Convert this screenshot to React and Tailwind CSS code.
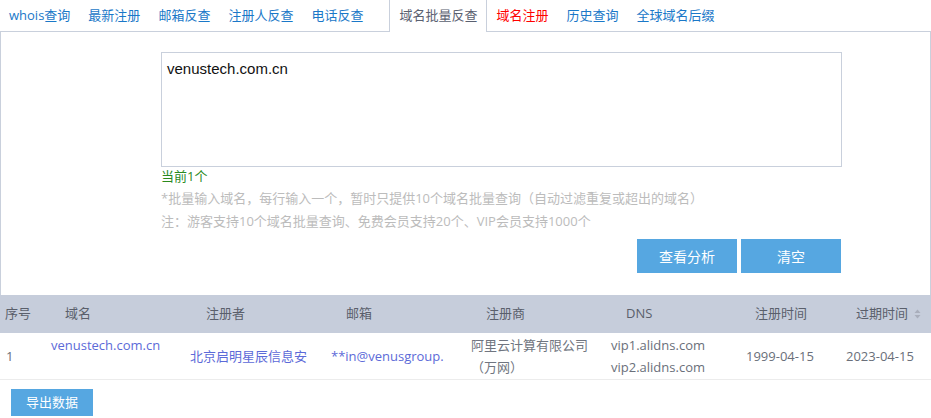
// 域名批量反查 页面
const tabs = [
  { name: 'whois查询' },
  { name: '最新注册' },
  { name: '邮箱反查' },
  { name: '注册人反查' },
  { name: '电话反查' },
  { name: '域名批量反查', active: true },
  { name: '域名注册', red: true },
  { name: '历史查询' },
  { name: '全球域名后缀' },
];

const font = { fontFamily: '"Open Sans", "Noto Sans CJK SC", sans-serif' };

function SortIcon() {
  return (
    <svg width="7" height="10" viewBox="0 0 7 10" className="ml-[6px]">
      <path d="M3.5 0.5 L6.5 4 L0.5 4 Z" fill="#a9aebb" />
      <path d="M3.5 9.5 L6.5 6 L0.5 6 Z" fill="#a9aebb" />
    </svg>
  );
}

export default function App() {
  return (
    <div className="w-[931px] h-[418px] bg-white overflow-hidden text-[13px]" style={font}>
      {/* 顶部标签 */}
      <div className="flex h-[32px] border-b border-[#c9d0dc]">
        {tabs.map((t, i) => (
          <div
            key={i}
            className={
              t.active
                ? 'ml-[17px] px-[9px] h-[32px] leading-[31px] border-x border-[#c9d0dc] bg-white text-[#5a6070]'
                : t.red
                ? 'px-[9px] leading-[31px] text-[#ff0000]'
                : 'px-[9px] leading-[31px] text-[#1a78c8]'
            }
          >
            {t.name}
          </div>
        ))}
      </div>

      {/* 输入区域 */}
      <div className="border-x border-[#c9d0dc] h-[263px] pt-[20px]">
        <div className="ml-[160px] w-[681px]">
          <div className="h-[115px] border border-[#c9d0dc] px-[5px] pt-[5px]">
            <span className="text-[15px] text-[#111]" style={{ fontFamily: '"Liberation Sans", sans-serif' }}>
              venustech.com.cn
            </span>
          </div>
          <div className="leading-[19px] text-[#2a8a1e]">当前1个</div>
          <div className="mt-[3px] leading-[19px] text-[#bcbcbc]">
            *批量输入域名，每行输入一个，暂时只提供10个域名批量查询（自动过滤重复或超出的域名）
          </div>
          <div className="mt-[4px] leading-[19px] text-[#bcbcbc]">
            注：游客支持10个域名批量查询、免费会员支持20个、VIP会员支持1000个
          </div>
          <div className="flex justify-end gap-[4px] mt-[8px] pr-px">
            <button className="w-[100px] h-[34px] bg-[#56a7e1] text-white text-[14px]">查看分析</button>
            <button className="w-[100px] h-[34px] bg-[#56a7e1] text-white text-[14px]">清空</button>
          </div>
        </div>
      </div>

      {/* 结果表格 */}
      <div className="flex h-[38px] items-center bg-[#c6cddb] text-[#5a5f6b]">
        <div className="w-[45px] pl-[5px]">序号</div>
        <div className="w-[135px] pl-[20px]">域名</div>
        <div className="w-[145px] pl-[26px]">注册者</div>
        <div className="w-[140px] pl-[21px]">邮箱</div>
        <div className="w-[140px] pl-[21px]">注册商</div>
        <div className="w-[135px] pl-[21px]">DNS</div>
        <div className="w-[100px] pl-[15px]">注册时间</div>
        <div className="flex items-center w-[91px] pl-[16px]">
          过期时间
          <SortIcon />
        </div>
      </div>
      <div className="flex h-[47px] items-center border-b border-[#ececec] text-[#6a6f7a] leading-[22px]">
        <div className="w-[45px] pl-[6px]">1</div>
        <div className="w-[135px] pl-[6px] self-start pt-px text-[#5c6ad8]">venustech.com.cn</div>
        <div className="w-[145px] pl-[10px] text-[#5c6ad8] whitespace-nowrap">北京启明星辰信息安</div>
        <div className="w-[140px] pl-[6px] text-[#5c6ad8] whitespace-nowrap">**in@venusgroup.</div>
        <div className="w-[140px] pl-[6px] pr-[10px] text-[#707580]">阿里云计算有限公司（万网）</div>
        <div className="w-[135px] pl-[6px]">
          <div>vip1.alidns.com</div>
          <div>vip2.alidns.com</div>
        </div>
        <div className="w-[100px] pl-[6px]">1999-04-15</div>
        <div className="w-[91px] pl-[6px]">2023-04-15</div>
      </div>
      <div className="pl-[11px] pt-[9px]">
        <button className="w-[82px] h-[27px] bg-[#56a7e1] text-white">导出数据</button>
      </div>
    </div>
  );
}
